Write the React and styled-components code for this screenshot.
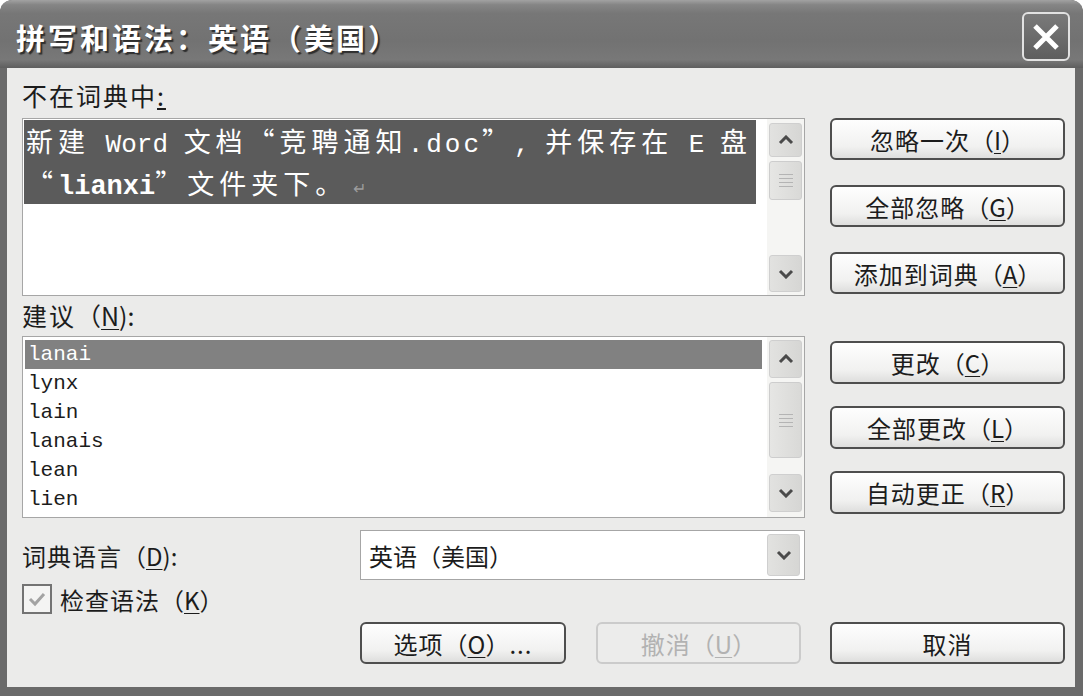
import React from 'react';
import styled, {createGlobalStyle} from 'styled-components';

const cjk = `"Noto Sans CJK SC", "Noto Sans", sans-serif`;
const mono = `"Liberation Mono", "DejaVu Sans Mono", "Noto Sans CJK SC", monospace`;

const GlobalStyle = createGlobalStyle`
  html, body {
    margin: 0;
    padding: 0;
    background: #ffffff;
  }
  body {
    font-family: ${cjk};
    color: #1c1c1c;
  }
`;

const Window = styled.div`
  width: 1083px;
  height: 696px;
  box-sizing: border-box;
  background: #6a6a6a;
  border-radius: 12px 12px 0 0;
  padding: 0 8px 9px 7px;
  display: flex;
  flex-direction: column;
  overflow: hidden;
`;

const TitleBar = styled.div`
  height: 68px;
  flex-shrink: 0;
  margin: 0 -8px 0 -7px;
  padding: 5px 13px 0 16px;
  box-sizing: border-box;
  display: flex;
  align-items: center;
  justify-content: space-between;
  border-radius: 12px 12px 0 0;
  background: linear-gradient(#a2a2a2 0, #858585 7%, #777777 20%, #727272 60%, #787878 88%, #5e5e5e 100%);
`;

const Title = styled.div`
  font-family: ${cjk};
  font-weight: 700;
  font-size: 29px;
  letter-spacing: 3px;
  color: #ffffff;
  text-shadow: 2px 2px 1px #2e2e2e;
`;

const CloseButton = styled.div`
  width: 44px;
  height: 45px;
  border: 2px solid #e2e2e2;
  border-radius: 6px;
  background: linear-gradient(#7a7a7a, #5e5e5e);
  display: flex;
  align-items: center;
  justify-content: center;
`;

const Body = styled.div`
  flex: 1;
  background: #ebebea;
  padding: 0 11px 0 15px;
  display: flex;
  flex-direction: column;
`;

const FieldLabel = styled.div`
  font-size: 25px;
  line-height: 34px;
  letter-spacing: 2px;
  padding-top: ${(p) => p.$top}px;
  margin-bottom: ${(p) => p.$bottom}px;
`;

const Section = styled.div`
  display: grid;
  grid-template-columns: 783px 235px;
  column-gap: 25px;
`;

const Box = styled.div`
  height: ${(p) => p.$h}px;
  box-sizing: border-box;
  border: 1px solid #a6a6a6;
  background: #ffffff;
  display: flex;
`;

const BoxContent = styled.div`
  flex: 1;
  padding: ${(p) => p.$pad};
  overflow: hidden;
`;

const Selection = styled.div`
  background: #5b5b5b;
  color: #ffffff;
  margin-right: 11px;
`;

const TextLine = styled.div`
  height: 42px;
  line-height: 42px;
  font-size: 26px;
  white-space: nowrap;
  padding-left: 2px;
`;

const Han = styled.span`
  font-family: ${cjk};
  font-size: 27px;
  letter-spacing: 5px;
`;

const Latin = styled.span`
  font-family: ${mono};
  font-weight: ${(p) => (p.$bold ? 700 : 400)};
  font-size: ${(p) => (p.$bold ? 27 : 26)}px;
  letter-spacing: ${(p) => p.$spacing || 0}px;
  white-space: pre;
`;

const Pilcrow = styled.span`
  font-family: ${cjk};
  font-size: 16px;
  color: #9c9c9c;
  margin-left: 6px;
`;

const Scrollbar = styled.div`
  width: 37px;
  flex-shrink: 0;
  background: #f5f5f3;
  box-sizing: border-box;
  padding: ${(p) => p.$pad};
  display: flex;
  flex-direction: column;
  gap: 4px;
`;

const ScrollArrow = styled.div`
  height: ${(p) => p.$h}px;
  width: ${(p) => (p.$w ? `${p.$w}px` : 'auto')};
  box-sizing: border-box;
  border: 1px solid #cfcfcf;
  border-radius: 3px;
  background: linear-gradient(90deg, #e2e2e0, #d6d6d4);
  display: flex;
  align-items: center;
  justify-content: center;
`;

const ScrollThumb = styled.div`
  height: ${(p) => p.$h}px;
  box-sizing: border-box;
  border: 1px solid #cdcdcd;
  border-radius: 3px;
  background: linear-gradient(90deg, #e6e6e4, #d9d9d7);
  display: flex;
  flex-direction: column;
  align-items: center;
  justify-content: center;
  gap: 3px;
`;

const Grip = styled.div`
  width: 14px;
  height: 1px;
  background: #b4b4b4;
`;

const Track = styled.div`
  flex: 1;
`;

const ButtonStack = styled.div`
  display: flex;
  flex-direction: column;
  justify-content: space-between;
  padding: ${(p) => p.$pad};
`;

const DialogButton = styled.div`
  height: ${(p) => p.$h || 42}px;
  width: ${(p) => (p.$w ? `${p.$w}px` : 'auto')};
  box-sizing: border-box;
  border: 2px solid ${(p) => (p.$disabled ? '#cbcbcb' : '#4e4e4e')};
  border-radius: 6px;
  background: ${(p) =>
    p.$disabled ? '#ececeb' : 'linear-gradient(#fefefe, #f1f1f0 70%, #dededd)'};
  color: ${(p) => (p.$disabled ? '#b2b2b2' : '#1c1c1c')};
  font-size: 24px;
  letter-spacing: 1px;
  display: flex;
  align-items: center;
  justify-content: center;
  white-space: nowrap;
`;

const LabelText = styled.span`
  white-space: nowrap;
`;

const Key = styled.span`
  letter-spacing: 0;
  u {
    text-underline-offset: 3px;
    text-decoration-thickness: 1px;
  }
`;

const ListItem = styled.div`
  height: 29px;
  line-height: 29px;
  font-family: ${mono};
  font-size: 21px;
  padding-left: 3px;
  margin-right: 5px;
  background: ${(p) => (p.$selected ? '#818181' : 'transparent')};
  color: ${(p) => (p.$selected ? '#ffffff' : '#1c1c1c')};
`;

const Footer = styled.div`
  display: grid;
  grid-template-columns: 338px 445px 25px 235px;
  grid-template-rows: 50px 30px 46px;
  row-gap: 4px;
  margin-top: 12px;
  align-items: center;
`;

const ComboBox = styled.div`
  grid-column: 2;
  grid-row: 1;
  height: 50px;
  box-sizing: border-box;
  border: 1px solid #a6a6a6;
  background: #ffffff;
  display: flex;
  align-items: center;
  justify-content: space-between;
  padding: 0 4px 0 8px;
  font-size: 24px;
`;

const CheckRow = styled.div`
  grid-column: 1;
  grid-row: ${(p) => p.$row};
  display: flex;
  align-items: center;
  gap: 8px;
  font-size: 24px;
  letter-spacing: 1px;
`;

const CheckBox = styled.div`
  width: 30px;
  height: 30px;
  box-sizing: border-box;
  border: 2px solid #737373;
  background: #f4f4f3;
  display: flex;
  align-items: center;
  justify-content: center;
`;

const ButtonPair = styled.div`
  grid-column: 2;
  grid-row: 3;
  display: flex;
  justify-content: space-between;
  padding-right: 4px;
  align-self: end;
`;

const CancelCell = styled.div`
  grid-column: 4;
  grid-row: 3;
  align-self: end;
`;

const Chevron = ({up}) => (
  <svg width="16" height="10" viewBox="0 0 16 10">
    <polyline
      points={up ? '2,8 8,2 14,8' : '2,2 8,8 14,2'}
      fill="none"
      stroke="#4a4a4a"
      strokeWidth="3"
    />
  </svg>
);

const ScrollBar = ({pad, upH, thumbH, downH}) => (
  <Scrollbar $pad={pad}>
    <ScrollArrow $h={upH}><Chevron up/></ScrollArrow>
    <ScrollThumb $h={thumbH}>
      <Grip/><Grip/><Grip/><Grip/>
    </ScrollThumb>
    <Track/>
    <ScrollArrow $h={downH}><Chevron/></ScrollArrow>
  </Scrollbar>
);

// mnemonic in full-width brackets; a trailing colon hugs a narrow bracket
const Label = ({text, k, colon}) => (
  <LabelText>
    {text}
    {k && <Key>（<u>{k}</u>{colon ? ')' : '）'}</Key>}
    {colon}
  </LabelText>
);

const suggestions = ['lanai', 'lynx', 'lain', 'lanais', 'lean', 'lien'];

function App() {
  return (
    <>
      <GlobalStyle/>
      <Window>
        <TitleBar>
          <Title>拼写和语法：英语（美国）</Title>
          <CloseButton>
            <svg width="30" height="30" viewBox="0 0 30 30">
              <path d="M4 4 L26 26 M26 4 L4 26" stroke="#ffffff" strokeWidth="5"/>
            </svg>
          </CloseButton>
        </TitleBar>
        <Body>
          <FieldLabel $top={10} $bottom={6}>
            不在词典中<u>:</u>
          </FieldLabel>
          <Section>
            <Box $h={178}>
              <BoxContent $pad="1px 0 0 1px">
                <Selection>
                  <TextLine>
                    <Han>新建</Han><Latin> Word </Latin><Han>文档“竞聘通知</Han>
                    <Latin $spacing={3}>.doc</Latin><Han>”</Han><Latin>, </Latin>
                    <Han>并保存在</Han><Latin> E </Latin><Han>盘</Han>
                  </TextLine>
                  <TextLine>
                    <Han>“</Han><Latin $bold>lianxi</Latin><Han>”文件夹下。</Han>
                    <Pilcrow>↵</Pilcrow>
                  </TextLine>
                </Selection>
              </BoxContent>
              <ScrollBar pad="4px 2px 3px" upH={34} thumbH={39} downH={37}/>
            </Box>
            <ButtonStack $pad="0 0 2px">
              <DialogButton><Label text="忽略一次" k="I"/></DialogButton>
              <DialogButton><Label text="全部忽略" k="G"/></DialogButton>
              <DialogButton><Label text="添加到词典" k="A"/></DialogButton>
            </ButtonStack>
          </Section>
          <FieldLabel $top={2} $bottom={4}>
            <Label text="建议" k="N" colon=":"/>
          </FieldLabel>
          <Section>
            <Box $h={182}>
              <BoxContent $pad="3px 0 0 2px">
                {suggestions.map((word, i) => (
                  <ListItem key={word} $selected={i === 0}>{word}</ListItem>
                ))}
              </BoxContent>
              <ScrollBar pad="3px 2px 5px" upH={38} thumbH={76} downH={38}/>
            </Box>
            <ButtonStack $pad="5px 0 4px">
              <DialogButton $h={43}><Label text="更改" k="C"/></DialogButton>
              <DialogButton $h={43}><Label text="全部更改" k="L"/></DialogButton>
              <DialogButton $h={43}><Label text="自动更正" k="R"/></DialogButton>
            </ButtonStack>
          </Section>
          <Footer>
            <CheckRow $row={1}>
              <Label text="词典语言" k="D" colon=":"/>
            </CheckRow>
            <ComboBox>
              <span>英语（美国）</span>
              <ScrollArrow $h={42} $w={33}><Chevron/></ScrollArrow>
            </ComboBox>
            <CheckRow $row={2}>
              <CheckBox>
                <svg width="18" height="16" viewBox="0 0 18 16">
                  <polyline points="2,8 7,13 16,3" fill="none" stroke="#a3a3a3" strokeWidth="3"/>
                </svg>
              </CheckBox>
              <Label text="检查语法" k="K"/>
            </CheckRow>
            <ButtonPair>
              <DialogButton $w={206}>
                <Label text="选项" k="O"/>...
              </DialogButton>
              <DialogButton $w={205} $disabled>
                <Label text="撤消" k="U"/>
              </DialogButton>
            </ButtonPair>
            <CancelCell>
              <DialogButton>取消</DialogButton>
            </CancelCell>
          </Footer>
        </Body>
      </Window>
    </>
  );
}

export default App;
